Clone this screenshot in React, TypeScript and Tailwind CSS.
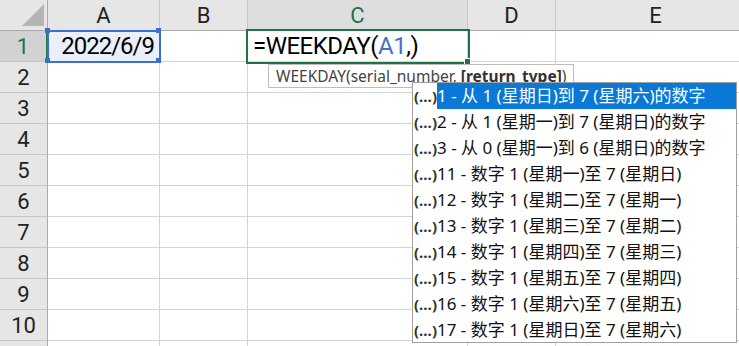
const cols = ['A', 'B', 'C', 'D', 'E'];
const rows = [1, 2, 3, 4, 5, 6, 7, 8, 9, 10, 11];

const items = [
  '1 - 从 1 (星期日)到 7 (星期六)的数字',
  '2 - 从 1 (星期一)到 7 (星期日)的数字',
  '3 - 从 0 (星期一)到 6 (星期日)的数字',
  '11 - 数字 1 (星期一)至 7 (星期日)',
  '12 - 数字 1 (星期二)至 7 (星期一)',
  '13 - 数字 1 (星期三)至 7 (星期二)',
  '14 - 数字 1 (星期四)至 7 (星期三)',
  '15 - 数字 1 (星期五)至 7 (星期四)',
  '16 - 数字 1 (星期六)至 7 (星期五)',
  '17 - 数字 1 (星期日)至 7 (星期六)',
];

function Corner() {
  return (
    <div className="bg-[#e6e6e6] border-r border-b border-r-[#ababab] border-b-[#ababab] flex items-end justify-end pr-[3px] pb-[4px]">
      <svg width="22" height="22" viewBox="0 0 22 22">
        <polygon points="22,0 22,22 0,22" fill="#b4b4b4" />
      </svg>
    </div>
  );
}

function A1Cell() {
  return (
    <div className="relative z-10 bg-[#e9f0fb] flex items-center justify-end pr-[5px] border-r border-b border-[#d4d4d4] outline-2 outline-[#3b6fc9] -outline-offset-1 font-['Roboto',sans-serif] text-[24px] tracking-[-1px]">
      <span>2022/6/9</span>
      <span className="absolute -left-[3px] -top-[3px] w-[5px] h-[5px] bg-[#3b6fc9]" />
      <span className="absolute -right-[2px] -top-[3px] w-[5px] h-[5px] bg-[#3b6fc9]" />
      <span className="absolute -left-[3px] -bottom-[2px] w-[5px] h-[5px] bg-[#3b6fc9]" />
      <span className="absolute -right-[2px] -bottom-[2px] w-[5px] h-[5px] bg-[#3b6fc9]" />
    </div>
  );
}

function C1Cell() {
  return (
    <div className="relative z-10 flex items-center pl-[5px] whitespace-nowrap border-r border-b border-[#d4d4d4] outline-2 outline-[#217346] font-['Roboto',sans-serif] text-[24px] tracking-[-0.5px]">
      <span>
        =WEEKDAY(<span className="text-[#4472c4]">A1</span>,)
      </span>
      <span className="absolute -right-[4px] -bottom-[4px] w-[7px] h-[7px] bg-[#217346] border border-white" />
    </div>
  );
}

export default function App() {
  return (
    <div className="relative w-[739px] h-[346px] overflow-hidden bg-white font-['Noto_Sans','Noto_Sans_CJK_SC',sans-serif] text-black">
      <div className="grid grid-cols-[48px_112px_88px_220px_88px_200px] grid-rows-[31px_repeat(11,31px)]">
        <Corner />
        {cols.map((c) => (
          <div
            key={c}
            className={`flex items-center justify-center font-['Roboto',sans-serif] text-[22px] border-r border-b border-r-[#c6c6c6] border-b-[#ababab] ${
              c === 'C' ? 'bg-[#dedede] text-[#217346]' : 'bg-[#e6e6e6] text-[#222]'
            }`}
          >
            {c}
          </div>
        ))}
        {rows.map((r) => (
          <Row key={r} r={r} />
        ))}
      </div>

      {/* function tooltip */}
      <div className="absolute z-20 left-[268px] top-[64px] w-[306px] h-[24px] pl-[7px] bg-white border border-[#bdbdbd] text-[15.5px] leading-[22px] text-[#444] whitespace-nowrap">
        WEEKDAY(serial_number, <span className="font-bold text-[#333]">[return_type]</span>)
      </div>

      {/* dropdown */}
      <div className="absolute z-30 left-[412px] top-[82px] w-[325px] h-[261px] bg-white border border-[#a0a0a0] flex flex-col">
        {items.map((t, i) => (
          <div key={t} className="h-[26px] flex items-stretch shrink-0">
            <div className="w-[24px] pl-[1px] flex items-center text-[15px] font-bold text-[#333]">(…)</div>
            <div
              className={`flex-1 flex items-center text-[17px] whitespace-nowrap ${
                i === 0 ? 'bg-[#0a78d7] text-white' : 'text-[#111]'
              }`}
            >
              {t}
            </div>
          </div>
        ))}
      </div>
    </div>
  );
}

function Row({ r }: { r: number }) {
  return (
    <>
      <div
        className={`flex items-center justify-center font-['Roboto',sans-serif] text-[22px] border-b border-b-[#c6c6c6] ${
          r === 1
            ? 'bg-[#d2d2d2] text-[#217346] border-r-2 border-r-[#217346]'
            : 'bg-[#e6e6e6] text-[#222] border-r border-r-[#ababab]'
        }`}
      >
        {r <= 10 ? r : ''}
      </div>
      {cols.map((c) => {
        if (r === 1 && c === 'A') return <A1Cell key={c} />;
        if (r === 1 && c === 'C') return <C1Cell key={c} />;
        return <div key={c} className="border-r border-b border-[#d4d4d4]" />;
      })}
    </>
  );
}
